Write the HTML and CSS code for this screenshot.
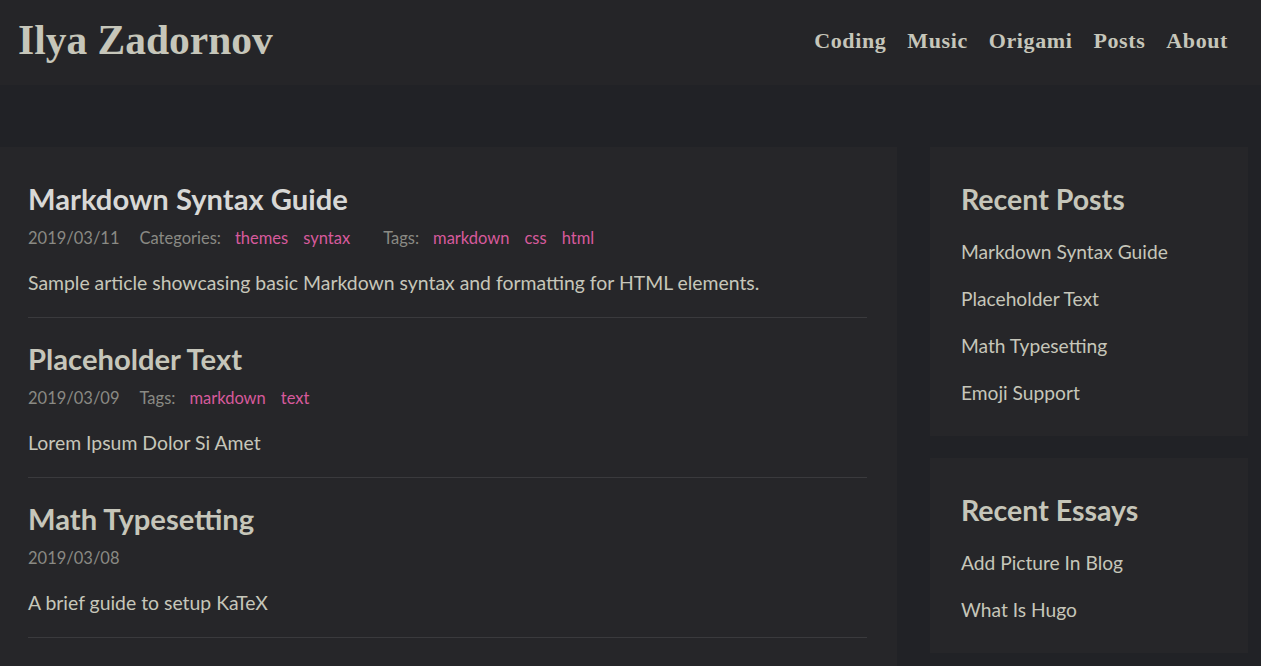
FILE: index.html
```html
<!DOCTYPE html>
<html lang="en">
<head>
    <meta charset="UTF-8">
    <meta name="viewport" content="width=device-width, initial-scale=1.0">
    <title>Ilya Zadornov</title>
    <link rel="stylesheet" href="styles.css">
</head>
<body>
    <header class="site-header">
        <a class="site-title" href="#">Ilya Zadornov</a>
        <nav class="site-nav">
            <a href="#">Coding</a>
            <a href="#">Music</a>
            <a href="#">Origami</a>
            <a href="#">Posts</a>
            <a href="#">About</a>
        </nav>
    </header>

    <div class="page">
        <main class="post-list">
            <article class="post">
                <h2 class="post-title hover"><a href="#">Markdown Syntax Guide</a></h2>
                <div class="post-meta">
                    <span class="date">2019/03/11</span>
                    <span class="label">Categories:</span>
                    <a class="tag" href="#">themes</a>
                    <a class="tag" href="#">syntax</a>
                    <span class="label wide">Tags:</span>
                    <a class="tag" href="#">markdown</a>
                    <a class="tag" href="#">css</a>
                    <a class="tag" href="#">html</a>
                </div>
                <p class="summary">Sample article showcasing basic Markdown syntax and formatting for HTML elements.</p>
            </article>

            <article class="post">
                <h2 class="post-title"><a href="#">Placeholder Text</a></h2>
                <div class="post-meta">
                    <span class="date">2019/03/09</span>
                    <span class="label">Tags:</span>
                    <a class="tag" href="#">markdown</a>
                    <a class="tag" href="#">text</a>
                </div>
                <p class="summary">Lorem Ipsum Dolor Si Amet</p>
            </article>

            <article class="post">
                <h2 class="post-title"><a href="#">Math Typesetting</a></h2>
                <div class="post-meta">
                    <span class="date">2019/03/08</span>
                </div>
                <p class="summary">A brief guide to setup KaTeX</p>
            </article>
        </main>

        <aside class="sidebar">
            <section class="widget">
                <h3>Recent Posts</h3>
                <ul>
                    <li><a href="#">Markdown Syntax Guide</a></li>
                    <li><a href="#">Placeholder Text</a></li>
                    <li><a href="#">Math Typesetting</a></li>
                    <li><a href="#">Emoji Support</a></li>
                </ul>
            </section>
            <section class="widget">
                <h3>Recent Essays</h3>
                <ul>
                    <li><a href="#">Add Picture In Blog</a></li>
                    <li><a href="#">What Is Hugo</a></li>
                </ul>
            </section>
        </aside>
    </div>
</body>
</html>
```

FILE: styles.css
```css
* {
    margin: 0;
    padding: 0;
    box-sizing: border-box;
}

body {
    font-family: Lato, "Open Sans", sans-serif;
    background-color: #212226;
    color: #c6c6ba;
    overflow: hidden;
}

a {
    color: inherit;
    text-decoration: none;
}

.site-header {
    height: 85px;
    background-color: #252528;
    display: flex;
    align-items: center;
    justify-content: space-between;
    padding: 0 33px 0 18px;
}

.site-title {
    font-family: "Liberation Serif", serif;
    font-weight: bold;
    font-size: 41.5px;
    color: #c6c6ba;
    margin-top: -6px;
}

.site-nav {
    display: flex;
    gap: 21px;
    margin-top: -4px;
}

.site-nav a {
    font-family: "Liberation Serif", serif;
    font-weight: bold;
    font-size: 22px;
    letter-spacing: 0.6px;
    color: #c6c6ba;
}

.page {
    display: flex;
    align-items: flex-start;
    gap: 33px;
    margin-top: 62px;
}

.post-list {
    width: 897px;
    background-color: #262629;
    padding: 11px 30px 0 28px;
    min-height: 530px;
}

.post {
    border-bottom: 1px solid #3a3a3d;
    padding: 25px 0 22px;
}

.post-title {
    font-size: 29.2px;
    font-weight: bold;
    line-height: 32px;
    color: #c6c6ba;
}

.post-title.hover {
    color: #d8d8d6;
}

.post-meta {
    margin-top: 12px;
    font-size: 16.5px;
    line-height: 22px;
    color: #8a8a84;
    display: flex;
}

.post-meta .date {
    margin-right: 20px;
}

.post-meta .label {
    margin-right: 14px;
}

.post-meta .label.wide {
    margin-left: 18px;
}

.post-meta .tag {
    color: #d65a9c;
    margin-right: 15px;
}

.summary {
    margin-top: 22px;
    font-size: 19.4px;
    line-height: 24px;
    color: #c6c6ba;
}

.sidebar {
    width: 318px;
    display: flex;
    flex-direction: column;
    gap: 22px;
}

.widget {
    background-color: #262629;
    padding: 36px 31px 20px;
}

.widget h3 {
    font-size: 28.5px;
    font-weight: bold;
    line-height: 32px;
    color: #c6c6ba;
    margin-bottom: 13px;
}

.widget ul {
    list-style: none;
}

.widget li {
    font-size: 19.2px;
    line-height: 47px;
}
```
